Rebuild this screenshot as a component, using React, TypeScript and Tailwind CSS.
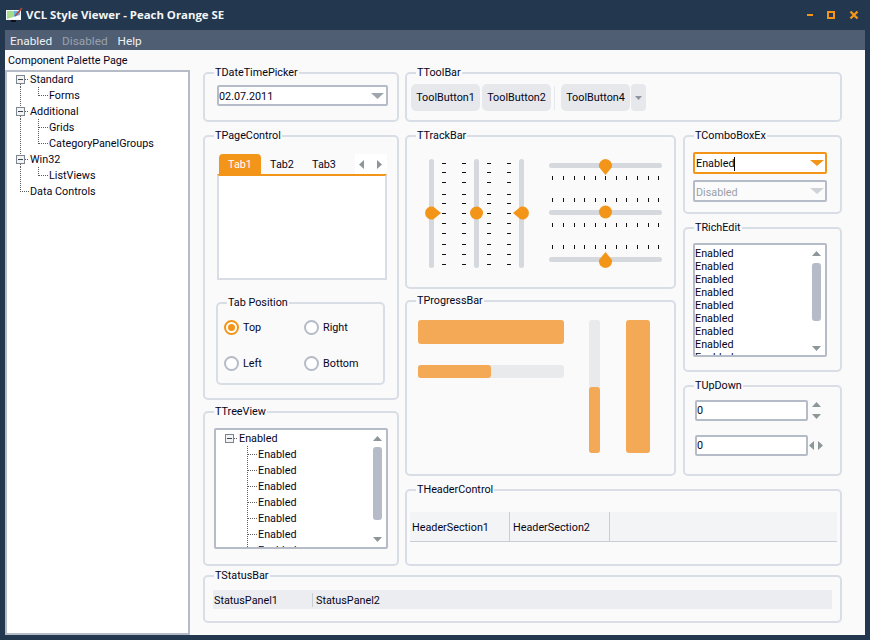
import React from "react";

const Tri = ({ dir, w, h, color, className = "" }: { dir: "up" | "down" | "left" | "right"; w: number; h: number; color: string; className?: string }) => {
  const pts = { up: `0,${h} ${w},${h} ${w / 2},0`, down: `0,0 ${w},0 ${w / 2},${h}`, left: `${w},0 ${w},${h} 0,${h / 2}`, right: `0,0 0,${h} ${w},${h / 2}` }[dir];
  return (
    <svg width={w} height={h} className={`shrink-0 block ${className}`}>
      <polygon points={pts} fill={color} />
    </svg>
  );
};

const Group = ({ title, className = "", children }: { title: string; className?: string; children?: React.ReactNode }) => (
  <div className={`relative border-2 border-[#d9dde5] rounded-[5px] box-border ${className}`}>
    <span className="absolute left-[9px] top-[-8px] px-[1px] h-[14px] leading-[14px] bg-[#fafafa] whitespace-nowrap">{title}</span>
    {children}
  </div>
);

const dot = { stroke: "#5a5a5a", strokeDasharray: "1 1", shapeRendering: "crispEdges" as const };

const Root = ({ label, above, below, box = true }: { label: string; above?: boolean; below?: boolean; box?: boolean }) => (
  <div className="flex h-[16px] items-center whitespace-nowrap">
    <svg width={23} height={16} className="shrink-0">
      {above && <line x1={13.5} y1={0} x2={13.5} y2={box ? 5 : 9} {...dot} />}
      {below && <line x1={13.5} y1={13} x2={13.5} y2={16} {...dot} />}
      <line x1={box ? 18 : 13} y1={8.5} x2={22} y2={8.5} {...dot} />
      {box && (
        <g shapeRendering="crispEdges">
          <rect x={9.5} y={4.5} width={8} height={8} fill="#f2f3f5" stroke="#7f858c" />
          <line x1={11} y1={8.5} x2={16} y2={8.5} stroke="#3f454d" />
        </g>
      )}
    </svg>
    <span className="pt-[2px]">{label}</span>
  </div>
);

const Leaf = ({ label, outer, more }: { label: string; outer?: boolean; more?: boolean }) => (
  <div className="flex h-[16px] items-center whitespace-nowrap">
    <svg width={42} height={16} className="shrink-0">
      {outer && <line x1={13.5} y1={0} x2={13.5} y2={16} {...dot} />}
      <line x1={31.5} y1={0} x2={31.5} y2={more ? 16 : 9} {...dot} />
      <line x1={32} y1={8.5} x2={41} y2={8.5} {...dot} />
    </svg>
    <span className="pt-[2px]">{label}</span>
  </div>
);

const Field = ({ className = "", children }: { className?: string; children?: React.ReactNode }) => (
  <div className={`border-2 border-[#b5bcc8] rounded-[2px] bg-white box-border flex items-center ${className}`}>{children}</div>
);

const Scroll = ({ gapTop, thumb, gapBottom, pad }: { gapTop: string; thumb: string; gapBottom: string; pad: string }) => (
  <div className={`w-[9px] mr-[4px] shrink-0 flex flex-col items-center ${pad}`}>
    <Tri dir="up" w={9} h={5} color="#8d9799" />
    <div className={`${gapTop} ${thumb} w-[9px] bg-[#b5bcc8] rounded-[3px]`} />
    <div className={gapBottom}>
      <Tri dir="down" w={9} h={5} color="#8d9799" />
    </div>
  </div>
);

const Radio = ({ label, on }: { label: string; on?: boolean }) => (
  <div className="flex items-center h-[14px]">
    <div className={`w-[15px] h-[15px] shrink-0 rounded-full border-2 bg-white flex items-center justify-center box-border ${on ? "border-[#f39519]" : "border-[#b5bcc8]"}`}>
      {on && <div className="w-[7px] h-[7px] rounded-full bg-[#f39519]" />}
    </div>
    <span className="ml-[4px] pt-[2px]">{label}</span>
  </div>
);

const ToolBtn = ({ label }: { label: string }) => (
  <div className="w-[69px] h-[27px] rounded-[5px] bg-[#e6e8ec] flex items-center justify-center">{label}</div>
);

const VTICK = [6, 15, 25, 37, 46, 56, 66, 76, 87, 97, 107];
const HTICK = [3, 14, 25, 35, 46, 56, 67, 77, 88, 99, 109];
const ORANGE = "#f39519";
const TRACK = "#d5d9dd";

const VBars = () => (
  <svg width={105} height={114} className="shrink-0">
    {[4, 49, 94].map((x) => (
      <rect key={x} x={x} y={2} width={5} height={109} rx={2.5} fill={TRACK} />
    ))}
    {[17, 37, 62, 82].map((x) =>
      VTICK.map((y) => <rect key={`${x}-${y}`} x={x} y={y} width={4} height={1} fill="#111" />)
    )}
    <path d="M16 56 L8.5 49.8 A6.5 6.5 0 1 0 8.5 62.2 Z" fill={ORANGE} />
    <circle cx={51.5} cy={56} r={6.5} fill={ORANGE} />
    <path d="M88 56 L95.5 49.8 A6.5 6.5 0 1 1 95.5 62.2 Z" fill={ORANGE} />
  </svg>
);

const HBars = () => (
  <svg width={114} height={114} className="shrink-0">
    {[6, 53, 100].map((y) => (
      <rect key={y} x={0} y={y} width={113} height={5} rx={2.5} fill={TRACK} />
    ))}
    {[19, 41, 66, 88].map((y) =>
      HTICK.map((x) => <rect key={`${x}-${y}`} x={x} y={y} width={1} height={4} fill="#111" />)
    )}
    <path d="M56.5 18 L50.3 10.5 A6.5 6.5 0 1 1 62.7 10.5 Z" fill={ORANGE} />
    <circle cx={56.5} cy={55} r={6.5} fill={ORANGE} />
    <path d="M56.5 95 L50.3 102.5 A6.5 6.5 0 1 0 62.7 102.5 Z" fill={ORANGE} />
  </svg>
);

export default function App() {
  return (
    <div className="w-[870px] h-[640px] bg-[#23384f] flex flex-col overflow-hidden font-['Roboto',sans-serif] text-[10.8px] leading-[14px] text-[#05051a]">
      <div className="h-[30px] flex items-center shrink-0 text-white">
        <svg width={18} height={16} viewBox="0 0 18 16" className="ml-[6px] shrink-0">
          <rect x={0} y={3} width={15} height={10} fill="#f2f6f8" />
          <rect x={1} y={4} width={7} height={8} fill="#a8dc8a" />
          <rect x={8} y={4} width={6} height={8} fill="#5fb4e8" />
          <polygon points="1,12 14,12 14,8" fill="#ffffff" />
          <rect x={5} y={13} width={5} height={2} fill="#111" />
          <line x1={9} y1={9} x2={16} y2={1} stroke="#c8402a" strokeWidth={1.5} />
        </svg>
        <span className="ml-[2px] font-bold text-[11.4px] font-['Open_Sans',sans-serif] text-[#f4f6f8]">VCL Style Viewer - Peach Orange SE</span>
        <div className="ml-auto flex items-center mr-[11px]">
          <svg width={8} height={9} className="shrink-0"><rect x={0} y={3} width={6} height={2} fill={ORANGE} /></svg>
          <svg width={9} height={9} className="ml-[12px] shrink-0"><rect x={1} y={1} width={6} height={6} fill="none" stroke={ORANGE} strokeWidth={2} /></svg>
          <svg width={10} height={10} className="ml-[13px] shrink-0"><path d="M1.5 1.5 L8.5 8.5 M8.5 1.5 L1.5 8.5" stroke={ORANGE} strokeWidth={2.4} /></svg>
        </div>
      </div>
      <div className="mx-[5px] h-[20px] shrink-0 bg-[#4f5e72] flex items-center gap-[10px] pl-[5px] pt-[1px] text-[11.8px] text-[#eef1f4]">
        <span>Enabled</span>
        <span className="text-[#98a2ae]">Disabled</span>
        <span>Help</span>
      </div>
      <div className="mx-[5px] h-[585px] shrink-0 bg-[#fafafa] flex">
        <div className="w-[185px] shrink-0 flex flex-col">
          <div className="h-[20px] flex items-center pl-[3px] pt-[2px]">Component Palette Page</div>
          <div className="flex-1 border-2 border-[#b5bcc8] bg-white">
            <div className="mt-[-1px]">
              <Root label="Standard" below />
              <Leaf label="Forms" outer />
              <Root label="Additional" above below />
              <Leaf label="Grids" outer more />
              <Leaf label="CategoryPanelGroups" outer />
              <Root label="Win32" above below />
              <Leaf label="ListViews" outer />
              <Root label="Data Controls" above box={false} />
            </div>
          </div>
        </div>
        <div className="pl-[13px] pt-[22px] flex flex-col">
          <div className="flex gap-[6px]">
            <div className="w-[196px] flex flex-col">
              <Group title="TDateTimePicker" className="h-[50px] pl-[12px] pt-[11px]">
                <Field className="w-[171px] h-[21px] justify-between pr-[2px]">
                  <span className="pt-[2px]">02.07.2011</span>
                  <Tri dir="down" w={13} h={6} color="#a0a6ae" />
                </Field>
              </Group>
              <Group title="TPageControl" className="h-[265px] mt-[13px] pl-[12px] pt-[17px]">
                <div className="w-[170px] h-[20px] flex items-end">
                  <div className="ml-[2px] w-[42px] h-[20px] pt-[2px] bg-[#f39519] rounded-t-[4px] flex items-center justify-center text-white">Tab1</div>
                  <div className="w-[42px] h-[20px] pt-[2px] flex items-center justify-center">Tab2</div>
                  <div className="w-[42px] h-[20px] pt-[2px] flex items-center justify-center">Tab3</div>
                  <div className="ml-auto flex items-center h-[20px] gap-[13px] pl-[4px] pr-[5px] bg-white">
                    <Tri dir="left" w={5} h={9} color="#8d9799" />
                    <Tri dir="right" w={5} h={9} color="#8d9799" />
                  </div>
                </div>
                <div className="w-[170px] h-[106px] border-t-2 border-t-[#f39519] border-x-2 border-b-2 border-x-[#d9dde5] border-b-[#d9dde5] bg-white box-border" />
                <Group title="Tab Position" className="w-[169px] h-[83px] mt-[22px] ml-[-1px] pt-[16px] pl-[6px]">
                  <div className="grid grid-cols-[80px_1fr] gap-y-[22px]">
                    <Radio label="Top" on />
                    <Radio label="Right" />
                    <Radio label="Left" />
                    <Radio label="Bottom" />
                  </div>
                </Group>
              </Group>
              <Group title="TTreeView" className="h-[155px] mt-[11px] pl-[9px] pt-[15px]">
                <Field className="w-[174px] h-[121px] !items-start overflow-hidden">
                  <div className="flex-1 h-[117px] overflow-hidden">
                    <Root label="Enabled" />
                    {[0, 1, 2, 3, 4, 5, 6].map((i) => (
                      <Leaf key={i} label="Enabled" more />
                    ))}
                  </div>
                  <Scroll gapTop="mt-[6px]" thumb="h-[73px]" gapBottom="mt-[17px]" pad="pt-[6px]" />
                </Field>
              </Group>
            </div>
            <div className="w-[437px] flex flex-col">
              <Group title="TToolBar" className="h-[50px] pl-[4px] pt-[10px]">
                <div className="flex items-center">
                  <ToolBtn label="ToolButton1" />
                  <div className="ml-[2px]"><ToolBtn label="ToolButton2" /></div>
                  <div className="ml-[3px] w-[1px] h-[24px] bg-[#e6e8ec]" />
                  <div className="ml-[6px]"><ToolBtn label="ToolButton4" /></div>
                  <div className="ml-[1px] w-[15px] h-[27px] rounded-[4px] bg-[#e6e8ec] flex items-center justify-center">
                    <Tri dir="down" w={7} h={4} color="#8f959c" />
                  </div>
                </div>
              </Group>
              <div className="flex gap-[7px] mt-[13px]">
                <div className="w-[271px] flex flex-col">
                  <Group title="TTrackBar" className="h-[154px] pl-[18px] pt-[20px] flex items-start">
                    <VBars />
                    <div className="ml-[19px]"><HBars /></div>
                  </Group>
                  <Group title="TProgressBar" className="h-[176px] mt-[11px] pl-[11px] pt-[18px] flex items-start">
                    <div className="w-[146px] flex flex-col">
                      <div className="h-[24px] bg-[#f3a955] rounded-[3px]" />
                      <div className="h-[13px] mt-[21px] bg-[#e8eaec] rounded-[3px] flex">
                        <div className="w-[73px] bg-[#f3a955] rounded-[3px]" />
                      </div>
                    </div>
                    <div className="ml-[25px] w-[11px] h-[133px] bg-[#e8eaec] rounded-[3px] flex flex-col justify-end">
                      <div className="h-[66px] bg-[#f3a955] rounded-[3px]" />
                    </div>
                    <div className="ml-[26px] w-[24px] h-[133px] bg-[#f3a955] rounded-[3px]" />
                  </Group>
                </div>
                <div className="w-[159px] flex flex-col">
                  <Group title="TComboBoxEx" className="h-[79px] pl-[8px] pt-[15px]">
                    <Field className="w-[134px] h-[22px] !border-[#f39519] pl-[1px] pr-[1px] justify-between">
                      <span className="flex items-center pt-[2px]">Enabled<span className="w-[1px] h-[14px] bg-black" /></span>
                      <Tri dir="down" w={14} h={6} color={ORANGE} />
                    </Field>
                    <Field className="w-[134px] h-[22px] mt-[6px] pl-[1px] pr-[1px] justify-between !bg-[#fbfbfb]">
                      <span className="text-[#9a9fa8] pt-[3px]">Disabled</span>
                      <Tri dir="down" w={14} h={6} color="#cfd3d8" />
                    </Field>
                  </Group>
                  <Group title="TRichEdit" className="h-[145px] mt-[13px] pl-[8px] pt-[14px]">
                    <Field className="w-[134px] h-[114px] !items-start overflow-hidden">
                      <div className="flex-1 h-[110px] overflow-hidden pt-[2px]">
                        {[0, 1, 2, 3, 4, 5, 6, 7, 8].map((i) => (
                          <div key={i} className="h-[13px] leading-[13px]">Enabled</div>
                        ))}
                      </div>
                      <Scroll gapTop="mt-[7px]" thumb="h-[58px]" gapBottom="mt-[25px]" pad="pt-[6px]" />
                    </Field>
                  </Group>
                  <Group title="TUpDown" className="h-[91px] mt-[13px] pl-[10px] pt-[13px]">
                    <div className="flex items-center">
                      <Field className="w-[113px] h-[21px]"><span>0</span></Field>
                      <div className="w-[16px] flex flex-col items-center gap-[7px]">
                        <Tri dir="up" w={9} h={5} color="#8d9799" />
                        <Tri dir="down" w={9} h={5} color="#8d9799" />
                      </div>
                    </div>
                    <div className="flex items-center mt-[14px]">
                      <Field className="w-[113px] h-[21px]"><span>0</span></Field>
                      <div className="ml-[1px] flex items-center gap-[4px]">
                        <Tri dir="left" w={5} h={9} color="#8d9799" />
                        <Tri dir="right" w={5} h={9} color="#8d9799" />
                      </div>
                    </div>
                  </Group>
                </div>
              </div>
              <Group title="THeaderControl" className="h-[77px] mt-[13px] pl-[3px] pt-[21px]">
                <div className="w-[427px] h-[30px] bg-[#f3f4f6] border-b border-[#c8cdd6] flex">
                  <div className="w-[100px] border-r border-[#c8cdd6] flex items-center pl-[2px] pt-[2px]">HeaderSection1</div>
                  <div className="w-[100px] border-r border-[#c8cdd6] flex items-center pl-[3px] pt-[2px]">HeaderSection2</div>
                </div>
              </Group>
            </div>
          </div>
          <Group title="TStatusBar" className="w-[639px] h-[48px] mt-[9px] pl-[8px] pt-[13px]">
            <div className="w-[619px] h-[19px] bg-[#ecedf1] flex items-center">
              <div className="w-[100px] h-[14px] border-r border-[#c8cdd6] flex items-center pl-[1px] pt-[2px]">StatusPanel1</div>
              <div className="pl-[3px] pt-[2px]">StatusPanel2</div>
            </div>
          </Group>
        </div>
      </div>
    </div>
  );
}
